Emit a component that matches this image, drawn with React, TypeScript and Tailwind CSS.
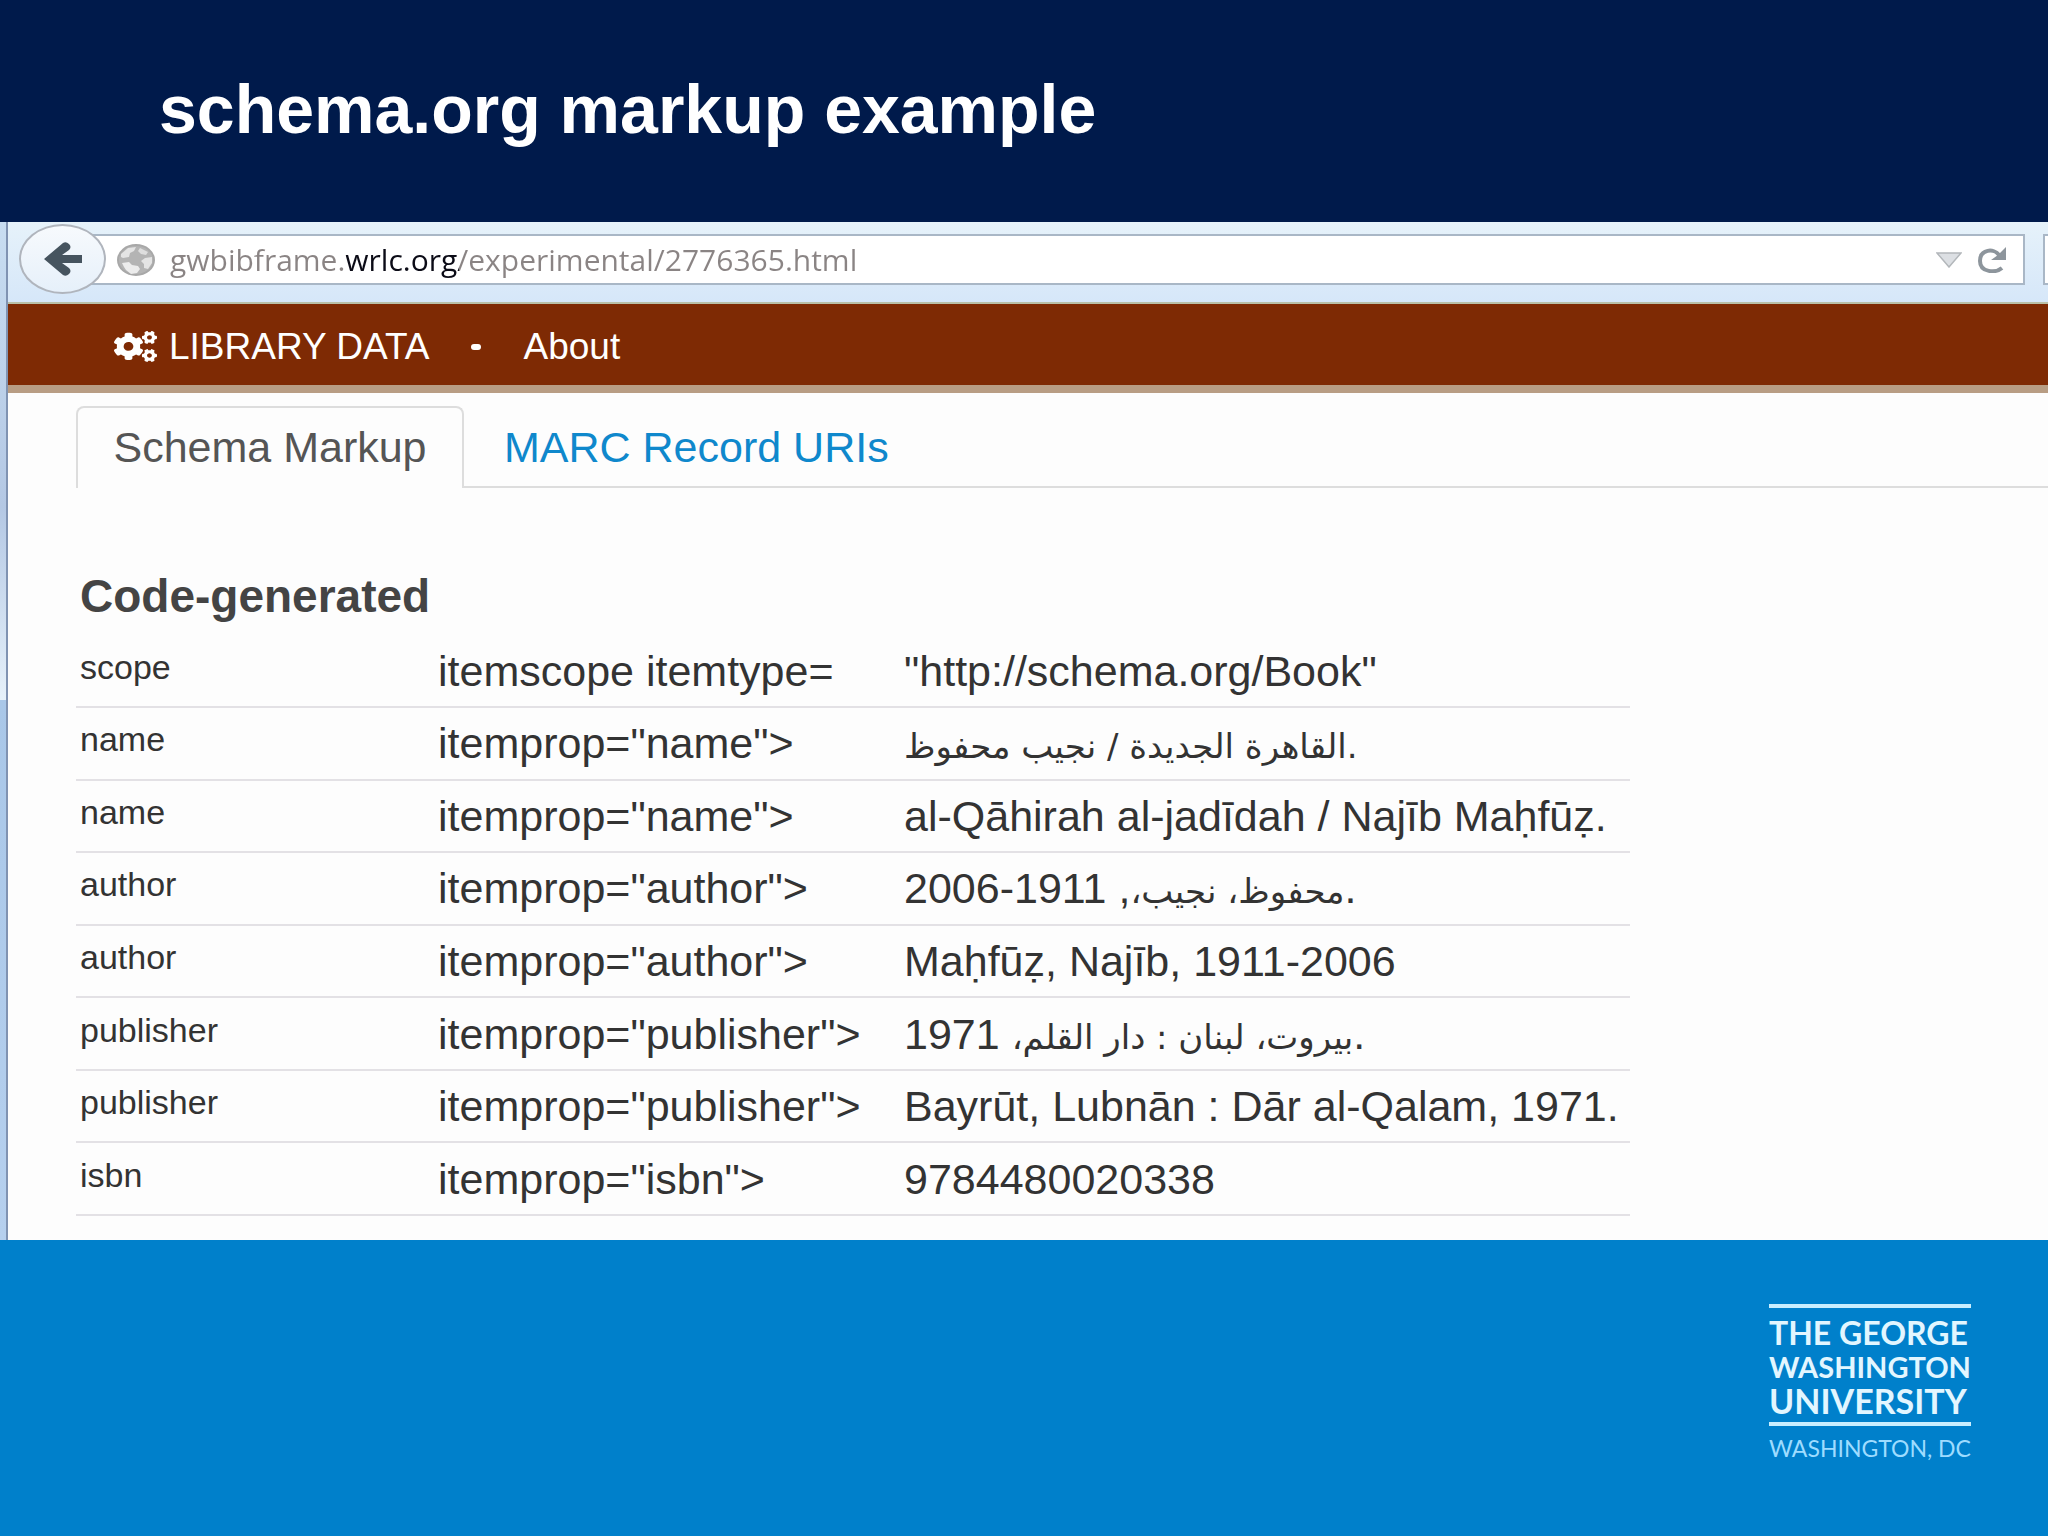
import type { ReactNode } from "react";
import { FaCogs } from "react-icons/fa";

// Arabic runs are set smaller so they sit evenly beside the Latin text
function Arabic({ children }: { children: ReactNode }) {
  return (
    <span lang="ar" className="font-['DejaVu_Sans',sans-serif] text-[34px] leading-none">
      {children}
    </span>
  );
}

const rows: { label: string; code: string; value: ReactNode }[] = [
  { label: "scope", code: "itemscope itemtype=", value: '"http://schema.org/Book"' },
  { label: "name", code: 'itemprop="name">', value: <Arabic>القاهرة الجديدة / نجيب محفوظ.</Arabic> },
  { label: "name", code: 'itemprop="name">', value: "al-Qāhirah al-jadīdah / Najīb Maḥfūẓ." },
  {
    label: "author",
    code: 'itemprop="author">',
    value: (
      <>
        <Arabic>محفوظ، نجيب،</Arabic>
        <span>, 1911-2006</span>
        <span>.</span>
      </>
    ),
  },
  { label: "author", code: 'itemprop="author">', value: "Maḥfūẓ, Najīb, 1911-2006" },
  {
    label: "publisher",
    code: 'itemprop="publisher">',
    value: (
      <>
        <Arabic>بيروت، لبنان : دار القلم،</Arabic>
        <span> 1971</span>
        <span>.</span>
      </>
    ),
  },
  { label: "publisher", code: 'itemprop="publisher">', value: "Bayrūt, Lubnān : Dār al-Qalam, 1971." },
  { label: "isbn", code: 'itemprop="isbn">', value: "9784480020338" },
];

function BackIcon() {
  return (
    <svg viewBox="0 0 38 34" className="h-[34px] w-[38px]" aria-hidden="true">
      <path
        d="M0 17 19 1q3-2 6 1 3 3 0 6l-7 5h20v8H18l7 5q3 3 0 6-3 3-6 1Z"
        fill="#46545f"
      />
    </svg>
  );
}

function GlobeIcon() {
  return (
    <svg viewBox="0 0 38 32" className="h-8 w-[38px] shrink-0" aria-hidden="true">
      <ellipse cx="19" cy="16" rx="18" ry="15" fill="#b4b4b4" stroke="#a8a8a8" strokeWidth="2" />
      <path d="M4 10 11 4l8-1-2 4-4 2-1 4-6 1-2-1Z" fill="#e4e4e4" />
      <path d="M23 4l8 4-2 3-5-1-3-3Z" fill="#dedede" />
      <path d="M5 19l7-1 3 3 6 1 2 3-3 4-6 1-5-4-2-3Z" fill="#ececec" />
      <path d="M28 14l7-1v6l-4 6-4-1v-4l-3-3Z" fill="#e4e4e4" />
    </svg>
  );
}

function ReloadIcon() {
  return (
    <svg viewBox="0 0 30 26" className="h-[26px] w-[30px]" aria-hidden="true">
      <path d="M25 21C19 26 3 26 3 14 3 2 17 1 22 8" fill="none" stroke="#8d959c" strokeWidth="4" />
      <path d="M29 0v13H14l7-5Z" fill="#8d959c" />
    </svg>
  );
}

function BrowserBar() {
  return (
    <div className="flex h-[82px] items-start border-b-2 border-[#b9c0a8] bg-linear-to-b from-[#e6f2fa] to-[#d6e7f9] pt-3">
      <div className="relative ml-12 flex h-[51px] flex-1 items-center gap-[15px] border-2 border-[#a9b7c6] bg-white pr-4 pl-[59px]">
        <button
          type="button"
          aria-label="Back"
          className="absolute -top-3 -left-[39px] flex h-[70px] w-[87px] items-center justify-center rounded-[50%] border-2 border-[#b0b5bd] bg-linear-to-b from-[#f7fafd] to-[#e6f0fa]"
        >
          <BackIcon />
        </button>
        <GlobeIcon />
        {/* The host part of the address is picked out in black */}
        <input
          type="text"
          aria-label="Address"
          defaultValue="gwbibframe.wrlc.org/experimental/2776365.html"
          className="min-w-0 flex-1 bg-[linear-gradient(to_right,#8a8484_176px,#0b0b16_176px,#0b0b16_289px,#8a8484_289px)] bg-clip-text font-['Open_Sans',sans-serif] text-[30px] leading-10 text-transparent outline-none"
        />
        <button type="button" aria-label="Show history">
          <svg viewBox="0 0 26 16" className="h-4 w-[26px]" aria-hidden="true">
            <path d="M1 1h24L13 15Z" fill="#dcdfe3" stroke="#b3b7bb" strokeWidth="1.5" />
          </svg>
        </button>
        <button type="button" aria-label="Reload">
          <ReloadIcon />
        </button>
      </div>
      <div className="ml-[18px] h-[51px] w-[5px] border-2 border-r-0 border-[#a9b7c6] bg-white" />
    </div>
  );
}

function SiteNav() {
  return (
    <nav className="flex h-[89px] items-center border-b-8 border-[#b89d84] bg-[#7e2a04] pt-1 pl-[106px] text-[37px] leading-10 text-white">
      <a href="#home" className="flex items-center gap-3">
        <FaCogs className="h-[31px] w-[43px]" preserveAspectRatio="none" />
        LIBRARY DATA
      </a>
      <span className="mx-[42px] h-[6px] w-[10px] rounded-full bg-white" />
      <a href="#about">About</a>
    </nav>
  );
}

function Tabs() {
  return (
    <div role="tablist" className="flex pt-[13px] text-[43px] leading-[48px]">
      <div className="w-[68px]" />
      <button
        type="button"
        role="tab"
        aria-selected="true"
        className="h-[82px] w-[388px] rounded-t-lg border-2 border-b-0 border-[#dddddd] pb-[2px] text-[#555555]"
      >
        Schema Markup
      </button>
      <button
        type="button"
        role="tab"
        aria-selected="false"
        className="flex-1 border-y-2 border-t-transparent border-b-[#dddddd] pl-10 text-left text-[#0f88cc]"
      >
        MARC Record URIs
      </button>
    </div>
  );
}

function MarkupTable() {
  return (
    <section className="pt-[82px] pl-[68px]">
      <h2 className="pl-1 text-[46px] leading-[52px] font-bold text-[#444444]">Code-generated</h2>
      <table className="mt-[14px] h-[580px] w-[1554px] table-fixed border-collapse text-left text-[#333333]">
        <tbody>
          {rows.map((row, i) => (
            <tr key={i} className="border-b-2 border-[#e3e1e5]">
              <th scope="row" className="w-[358px] pb-2 pl-1 align-middle text-[34px] leading-10 font-normal">
                {row.label}
              </th>
              <td className="w-[466px] pl-1 align-middle text-[43px] leading-[48px] whitespace-nowrap">{row.code}</td>
              <td className="pl-1 align-middle text-[43px] leading-[48px] whitespace-nowrap">{row.value}</td>
            </tr>
          ))}
        </tbody>
      </table>
    </section>
  );
}

function UniversityLogo() {
  return (
    <div className="w-[202px] font-['Lato',sans-serif] whitespace-nowrap text-[#e2f6ff]">
      <div className="border-y-4 border-[#c9eeff] pt-2 pb-1 font-bold">
        <p className="text-[32px] leading-[34px]">THE GEORGE</p>
        <p className="text-[29px] leading-[34px]">WASHINGTON</p>
        <p className="text-[34px] leading-[34px]">UNIVERSITY</p>
      </div>
      <p className="mt-[6px] text-[23px] leading-8 text-[#9edcff]">WASHINGTON, DC</p>
    </div>
  );
}

export default function App() {
  return (
    <div className="flex min-h-screen flex-col bg-[#0080cb] font-['Liberation_Sans',sans-serif]">
      <header className="flex h-[222px] items-center bg-[#001a4b] pb-1 pl-[159px]">
        <h1 className="text-[68px] leading-[80px] font-bold text-white">schema.org markup example</h1>
      </header>

      <main className="flex bg-[#fdfdfd]">
        <div className="w-2 shrink-0 border-r-2 border-[#8093b2] bg-[linear-gradient(to_bottom,#c8ddf1_0%,#b4c8e4_28%,#e6f1fa_47%,#a9c7e8_47%,#b6d0ee_100%)]" />
        <div className="min-w-0 flex-1 pb-6">
          <BrowserBar />
          <SiteNav />
          <Tabs />
          <MarkupTable />
        </div>
      </main>

      <footer className="flex flex-1 items-start justify-end pt-16 pr-[77px]">
        <UniversityLogo />
      </footer>
    </div>
  );
}
